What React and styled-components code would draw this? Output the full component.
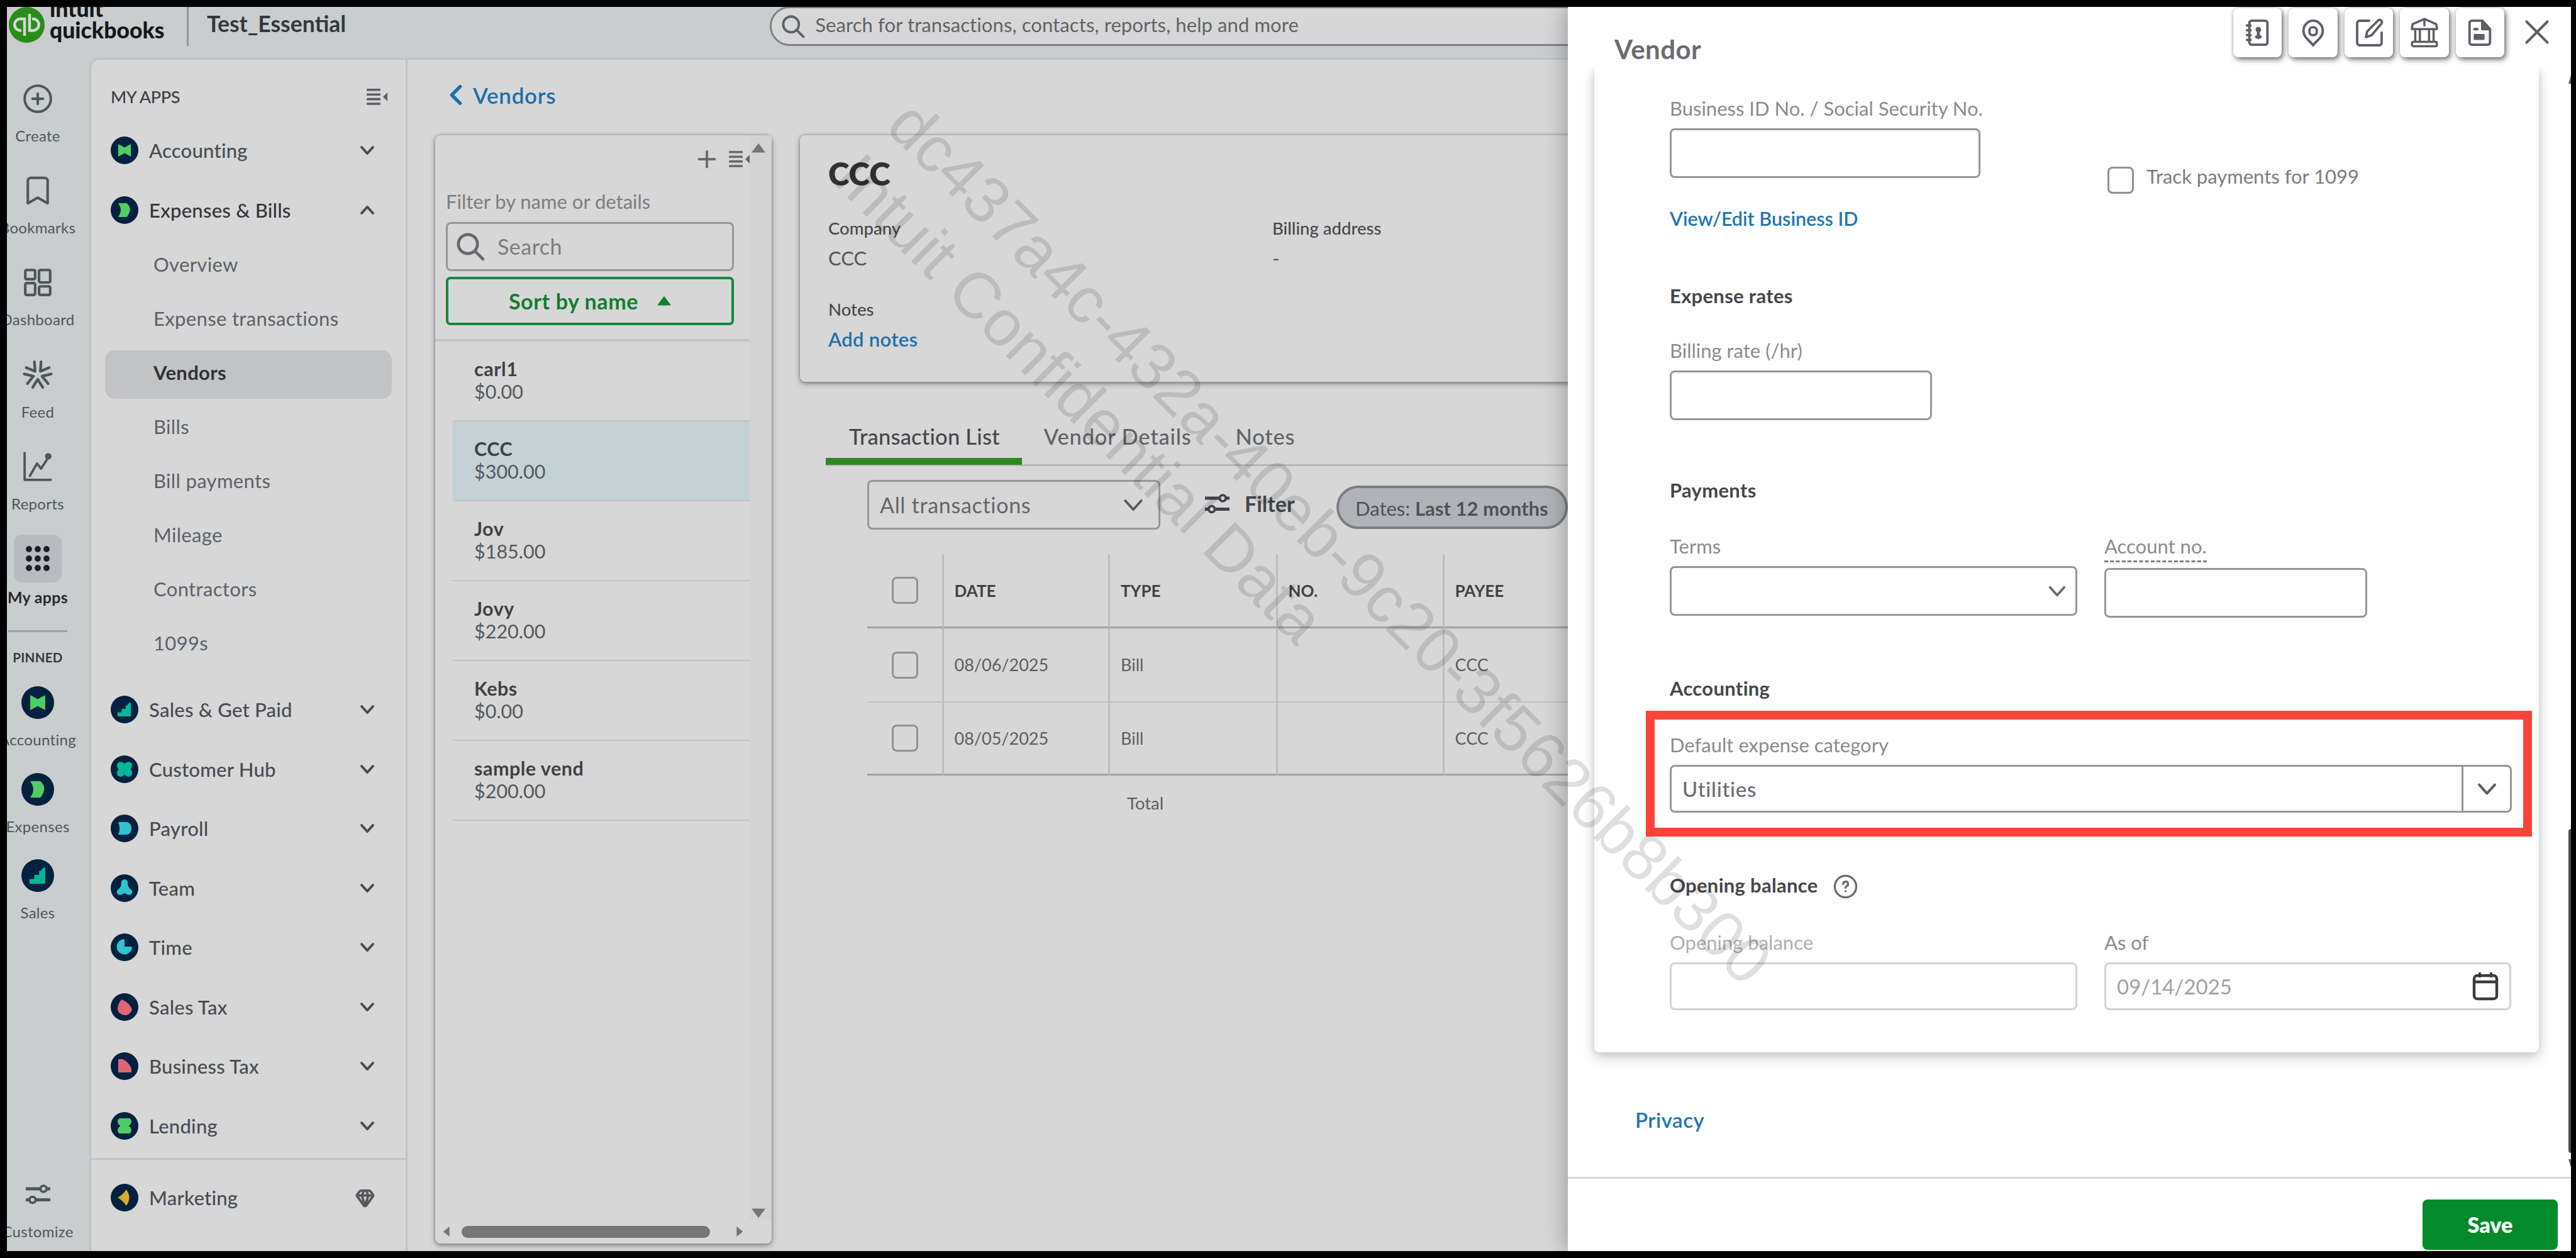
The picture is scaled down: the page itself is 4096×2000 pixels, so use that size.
import React from 'react';
import styled, { createGlobalStyle, css } from 'styled-components';
import { Bookmark, CirclePlus, Gem, X } from 'lucide-react';

const GlobalStyle = createGlobalStyle`
  *, *::before, *::after {
    box-sizing: border-box;
  }

  body {
    margin: 0;
    background: #000;
    color: #44474a;
    font-family: Lato, "Open Sans", sans-serif;
    font-size: 31px;
    line-height: 40px;
    white-space: nowrap;
  }

  svg {
    display: block;
    flex: none;
  }
`;

/* ---------- shell ---------- */

const Screen = styled.div`
  position: relative;
  display: flex;
  flex-direction: column;
  width: 4096px;
  height: 2000px;
  border: 11px solid #000;
  border-right-width: 8px;
  background: #c9cdce;
  overflow: hidden;
`;

const Header = styled.header`
  display: flex;
  align-items: flex-start;
  height: 81px;
  flex: none;
`;

const Body = styled.div`
  display: flex;
  flex: 1;
  min-height: 0;
`;

const Logo = styled.div`
  display: flex;
  align-items: flex-start;
  width: 286px;
  padding-left: 3px;
`;

const Wordmark = styled.div`
  margin: -14px 0 0 8px;
  color: #15171a;
  font-size: 35.5px;
  font-weight: 900;
  line-height: 34px;
`;

const CompanyName = styled.div`
  height: 62px;
  padding: 7px 0 0 29px;
  border-left: 3px solid #8f969b;
  color: #34383c;
  font-size: 35.5px;
  font-weight: 700;
`;

const GlobalSearch = styled.div`
  display: flex;
  align-items: flex-start;
  width: 1900px;
  height: 63px;
  margin: -1px 0 0 674px;
  padding: 6px 0 0 16px;
  gap: 16px;
  border: 3px solid #7d8488;
  border-radius: 32px;
  background: #d7d7d7;
  color: #5f6367;
  letter-spacing: 0.1px;
  flex: none;

  & > svg {
    margin-top: 5px;
  }
`;

/* ---------- rail ---------- */

const Rail = styled.nav`
  display: flex;
  flex-direction: column;
  align-items: center;
  width: 131px;
  padding: 27px 33px 0 0;
  flex: none;
`;

const RailEntry = styled.div`
  display: flex;
  flex-direction: column;
  align-items: center;
  height: ${props => props.pinned ? 137.5 : 146.2}px;
  color: ${props => props.active ? '#26292d' : '#4f565b'};
  font-size: ${props => props.active ? 25 : 24}px;
  font-weight: ${props => props.active ? 700 : 400};
  line-height: 28px;
  letter-spacing: 0.3px;
  flex: none;
`;

const RailTile = styled.div`
  display: grid;
  place-items: center;
  width: 76px;
  height: 76px;
  margin-bottom: ${props => props.active ? 9 : 7}px;
  border-radius: 13px;
  background: ${props => props.active ? '#b8bcc0' : 'transparent'};
`;

const RailDivider = styled.div`
  width: 94px;
  height: 3px;
  margin: 6px 0 28px;
  background: #98a4a7;
  flex: none;
`;

const RailHeading = styled.div`
  margin-bottom: 22px;
  color: #34393d;
  font-size: 20.5px;
  font-weight: 700;
  line-height: 24px;
  letter-spacing: 0.3px;
`;

const RailFooter = styled.div`
  margin-top: auto;
  height: 128px;
`;

/* ---------- app nav ---------- */

const AppNav = styled.nav`
  display: flex;
  flex-direction: column;
  width: 506px;
  border: 3px solid #bfc4c7;
  border-bottom: 0;
  border-radius: 16px 0 0 0;
  background: #d7d7d7;
  letter-spacing: 0.25px;
  flex: none;
`;

const NavTitle = styled.div`
  display: flex;
  align-items: center;
  justify-content: space-between;
  height: 97px;
  padding: 20px 29px 0 31px;
  color: #3b3f45;
  font-size: 27px;
  font-weight: 500;
  letter-spacing: -0.4px;
`;

const NavItem = styled.div`
  display: flex;
  align-items: center;
  height: 94.5px;
  padding: 0 49px 0 31px;
  gap: 17px;
  color: ${props => props.open ? '#30353d' : '#474c53'};
  font-weight: 500;
  flex: none;

  & > span {
    flex: 1;
  }
`;

const SubNav = styled.div`
  display: flex;
  flex-direction: column;
  gap: 9px;
  padding: 4px 22px 17px;
`;

const SubItem = styled.div`
  height: 77px;
  padding: 15px 0 0 77px;
  border-radius: 15px;
  background: ${props => props.active ? '#c2c3c5' : 'transparent'};
  color: ${props => props.active ? '#2e3238' : '#5c6167'};
  font-weight: ${props => props.active ? 700 : 400};
  letter-spacing: 0.35px;
`;

const NavFooter = styled.div`
  margin-top: 4px;
  padding-top: 13px;
  border-top: 3px solid #bfc3c6;
`;

/* ---------- main ---------- */

const Main = styled.main`
  flex: 1;
  min-width: 0;
  border-top: 3px solid #c0c5c7;
  background: #d7d7d7;
  padding: 36px 0 0 44px;
  overflow: hidden;
`;

const BackLink = styled.div`
  display: flex;
  align-items: center;
  gap: 11px;
  padding-left: 17px;
  color: #1f6ea8;
  font-size: 35px;
  font-weight: 600;
  letter-spacing: 0.7px;
`;

const Columns = styled.div`
  display: flex;
  align-items: flex-start;
  gap: 45px;
  margin-top: 44px;
`;

const Card = styled.section`
  border-radius: 8px;
  background: #d7d7d7;
  box-shadow: 0 3px 9px rgba(0, 0, 0, 0.38), 0 0 4px rgba(0, 0, 0, 0.25);
`;

const ListCard = styled(Card)`
  display: grid;
  grid-template: 1fr 38px / 1fr 35px;
  width: 535px;
  height: 1762px;
  flex: none;
`;

const ListTools = styled.div`
  display: flex;
  align-items: center;
  justify-content: flex-end;
  height: 75px;
  gap: 20px;
`;

const FilterBox = styled.div`
  padding: 10px 25px 22px 17px;
  border-bottom: 4px solid #c4c4c4;
  color: #7d7d7f;
`;

const box = css`
  border: 3px solid ${props => props.faint ? '#d3d3d6' : '#96969b'};
  border-radius: 8px;
`;

const SearchBox = styled.div`
  ${box}
  display: flex;
  align-items: center;
  height: 78px;
  margin-top: 13px;
  padding-left: 14px;
  gap: 20px;
  font-size: 34px;
  letter-spacing: 0.5px;
`;

const SortButton = styled.div`
  display: flex;
  align-items: center;
  justify-content: center;
  height: 77px;
  margin-top: 9px;
  gap: 30px;
  border: 4px solid #1a8540;
  border-radius: 7px;
  color: #0f7f31;
  font-size: 34px;
  font-weight: 700;
  letter-spacing: 0.6px;
`;

const VendorRow = styled.div`
  height: 127px;
  margin-left: 28px;
  padding: 25px 0 0 34px;
  border-bottom: 2px solid #c3c3c4;
  background: ${props => props.active ? '#c4d1d5' : 'transparent'};
  color: #56585b;
  font-size: 30.5px;
  line-height: 36px;

  & > b {
    display: block;
    color: #3f4144;
    letter-spacing: 0.5px;
  }
`;

const ScrollColumn = styled.div`
  display: flex;
  flex-direction: column;
  align-items: center;
  justify-content: space-between;
  padding: 10px 8px 0 0;
  background: #d3d3d3;
`;

const ScrollRow = styled.div`
  display: flex;
  align-items: center;
  padding-left: 10px;
`;

const ScrollThumb = styled.div`
  width: 395px;
  height: 19px;
  margin: 0 39px 0 16px;
  border-radius: 10px;
  background: #777;
`;

const Detail = styled.div`
  flex: 1;
  min-width: 0;
`;

const SummaryCard = styled(Card)`
  display: grid;
  grid-template-columns: 706px 1fr;
  grid-auto-rows: min-content;
  height: 392px;
  padding: 32px 0 0 45px;
`;

const VendorName = styled.h1`
  grid-column: 1 / -1;
  margin: 0 0 40px;
  color: #303234;
  font-size: 51px;
  font-weight: 800;
  line-height: 58px;
`;

const Fact = styled.div`
  margin-bottom: 44px;
  color: #55575a;
  line-height: 40px;

  & > small {
    display: block;
    margin-bottom: 9px;
    color: #46484b;
    font-size: 27.5px;
    font-weight: 500;
    line-height: 36px;
  }
`;

const InlineLink = styled.span`
  color: #1f6ea8;
  font-weight: 600;
  letter-spacing: 0.3px;
`;

const Tabs = styled.div`
  display: flex;
  height: 94px;
  margin: 40px 0 0 41px;
  border-bottom: 3px solid #b6b7bb;
`;

const Tab = styled.div`
  height: 92px;
  padding: 27px 35px 0 ${props => props.active ? 37 : 35}px;
  border-bottom: ${props => props.active ? '11px solid #2c8a1c' : '0'};
  color: ${props => props.active ? '#44474a' : '#606367'};
  font-size: 34.5px;
  font-weight: 500;
  letter-spacing: ${props => props.active ? 0.2 : 0.8}px;
`;

const FilterBar = styled.div`
  display: flex;
  align-items: flex-start;
  margin: 22px 0 0 107px;
`;

const TypeSelect = styled.div`
  ${box}
  display: flex;
  align-items: center;
  justify-content: space-between;
  width: 466px;
  height: 79px;
  padding: 0 23px 0 17px;
  color: #636669;
  font-size: 34px;
  letter-spacing: 0.7px;
`;

const FilterButton = styled.div`
  display: flex;
  align-items: center;
  width: 209px;
  height: 75px;
  margin-left: 71px;
  gap: 24px;
  font-size: 34px;
  font-weight: 700;
`;

const DateChip = styled.div`
  height: 69px;
  margin-top: 9px;
  padding: 12px 27px 0 26px;
  border: 4px solid #7b7d82;
  border-radius: 35px;
  background: #b1b3b8;
  color: #505257;
`;

const Table = styled.div`
  display: grid;
  grid-template-columns: 121.5px 264.5px 266.5px 265px 1fr;
  grid-template-rows: 118px 118px 116px;
  margin: 39px 0 0 107px;
  font-size: 27px;
`;

const Cell = styled.div`
  display: flex;
  align-items: center;
  padding-left: 17px;
  border-right: 3px solid #bcbdc0;
  border-bottom: ${props => props.edge ? '3px solid #a0a1a5' : '2px solid #c2c3c5'};
  color: ${props => props.head ? '#404246' : '#5c5e61'};
  font-size: ${props => props.head ? 26 : 27}px;
  font-weight: ${props => props.head ? 700 : 400};

  &:nth-child(5n) {
    border-right: 0;
  }

  &:nth-child(5n + 1) {
    padding-left: 39px;
  }
`;

const Checkbox = styled.span`
  width: 42px;
  height: 43px;
  border: 3px solid #919195;
  border-radius: 8px;
  flex: none;
`;

const TotalLabel = styled.div`
  margin: 24px 0 0 520px;
  color: #5c5e61;
  font-size: 27.5px;
`;

/* ---------- drawer ---------- */

const Drawer = styled.aside`
  position: absolute;
  top: 0;
  right: 0;
  bottom: 0;
  display: flex;
  flex-direction: column;
  width: 1595px;
  background: #fff;
  box-shadow: -4px 0 34px rgba(0, 0, 0, 0.28);
`;

const DrawerHeader = styled.div`
  display: flex;
  align-items: flex-start;
  height: 97px;
  padding: 2px 21px 0 74px;
  flex: none;
`;

const DrawerTitle = styled.h2`
  flex: 1;
  margin: 41px 0 0;
  color: #6b6c72;
  font-size: 42px;
  font-weight: 700;
  line-height: 48px;
  letter-spacing: 0.4px;
`;

const JumpButtons = styled.div`
  display: flex;
  gap: 11px;
  margin-right: 19px;
`;

const JumpButton = styled.div`
  display: grid;
  place-items: center;
  width: 77.4px;
  height: 78px;
  border-radius: 8px;
  background: #fff;
  box-shadow: 3px 4px 8px rgba(0, 0, 0, 0.5), 0 0 5px rgba(0, 0, 0, 0.25);
  color: #5f6066;
`;

const CloseButton = styled.div`
  padding-top: 5px;
  color: #5f6066;
`;

const DrawerBody = styled.div`
  flex: 1;
  min-height: 0;
  padding: 0 51px 0 42px;
  overflow: hidden;
`;

const FormCard = styled.div`
  position: relative;
  padding: 44px 43px 68px 120px;
  height: 1565px;
  border-radius: 0 0 8px 8px;
  background: #fff;
  box-shadow: 0 8px 20px rgba(0, 0, 0, 0.2), 0 0 12px rgba(0, 0, 0, 0.1);
`;

const FormRow = styled.div`
  display: grid;
  grid-template-columns: 648px 647px;
  gap: 43px;
  margin-top: ${props => props.space || 0}px;
`;

const FieldLabel = styled.div`
  width: max-content;
  height: 40px;
  margin-bottom: 12px;
  color: ${props => props.faint ? '#b1b1b5' : '#8b8b8f'};
  border-bottom: ${props => props.hint ? '3px dashed #808085' : '0'};
  ${props => props.hint && 'height: 46px; margin-bottom: 9px;'}
`;

const TextInput = styled.div`
  ${box}
  display: flex;
  align-items: center;
  justify-content: space-between;
  width: ${props => props.w ? `${props.w}px` : '100%'};
  height: ${props => props.h || 79}px;
  padding: 0 14px 0 17px;
  color: ${props => props.faint ? '#a1a1a5' : '#6b6c72'};
  font-size: 33px;
`;

const Value = styled.span`
  font-weight: 500;
  letter-spacing: 0.7px;
`;

const SectionTitle = styled.h3`
  display: flex;
  align-items: center;
  gap: 24px;
  height: 40px;
  margin: ${props => props.space}px 0 0;
  color: #46474b;
  font-size: 31px;
  font-weight: 700;
  letter-spacing: 0.3px;

  & > svg {
    margin-top: 4px;
  }
`;

const CheckLine = styled.div`
  display: flex;
  align-items: flex-start;
  height: 131px;
  gap: 20px;
  padding: 113px 0 0 5px;
  color: #7c7c81;
  font-size: 31px;

  & > div {
    margin-top: -5px;
  }
`;

const FormLink = styled.div`
  margin-top: ${props => props.space}px;
  color: #2176b6;
  font-size: ${props => props.size || 30.5}px;
  font-weight: 600;
`;

const ComboSplit = styled.div`
  display: grid;
  place-items: center;
  width: 77px;
  height: 100%;
  margin-right: -14px;
  border-left: 3px solid #96969b;
`;

// red callout drawn over the category field
const Callout = styled.div`
  position: absolute;
  left: 82px;
  top: 1022px;
  width: 1409px;
  height: 200px;
  border: 14.5px solid #fa443a;
`;

const PrivacyWrap = styled.div`
  padding-left: 65px;
  letter-spacing: 0.5px;
`;

const DrawerFooter = styled.div`
  display: flex;
  justify-content: flex-end;
  align-items: flex-start;
  height: 118px;
  padding: 33px 21px 0 0;
  border-top: 3px solid #d6d8dc;
  flex: none;
`;

const SaveButton = styled.div`
  width: 215px;
  height: 80px;
  border-radius: 8px;
  background: #028a2c;
  color: #fff;
  font-size: 34px;
  font-weight: 800;
  line-height: 80px;
  text-align: center;
`;

const EdgeScroll = styled.div`
  position: absolute;
  right: 0;
  top: 1307px;
  width: 4px;
  height: 515px;
  border-radius: 4px 0 0 4px;
  background: #4d4d4f;
`;

const EdgeArrow = styled.div`
  position: absolute;
  right: 0;
  top: ${props => props.y}px;
  width: 4px;
  height: 13px;
  background: #5b5b5e;
  clip-path: ${props => props.down ? 'polygon(0 0, 100% 0, 100% 100%)' : 'polygon(100% 0, 100% 100%, 0 100%)'};
`;

const Watermark = styled.div`
  position: absolute;
  left: 1462px;
  top: 126px;
  color: rgba(0, 0, 0, 0.125);
  font-family: "Liberation Sans", Arial, sans-serif;
  font-size: 103.5px;
  line-height: 119px;
  transform: rotate(45deg);
  transform-origin: 0 0;
  pointer-events: none;
`;

/* ---------- icons ---------- */

const Icon = ({ size = 48, w = 2, color = 'currentColor', children }) => (
  <svg width={size} height={size} viewBox="0 0 24 24" fill="none" stroke={color}
    strokeWidth={w} strokeLinecap="round" strokeLinejoin="round">{children}</svg>
);

const Chevron = ({ up, size = 24, color = '#484c50', w = 4 }) => (
  <Icon size={size} w={w} color={color}><path d={up ? 'M3 17l9-10 9 10' : 'M3 7l9 10 9-10'} /></Icon>
);

const Triangle = ({ dir = 'up', size = 22, color = '#757575' }) => {
  const points = { up: '0,19 12,3 24,19', down: '0,5 24,5 12,21', left: '19,0 19,24 4,12', right: '5,0 5,24 20,12' };
  return <svg width={size} height={size} viewBox="0 0 24 24" fill={color}><polygon points={points[dir]} /></svg>;
};

const Collapse = ({ color = '#5a5e62' }) => (
  <svg width="33" height="26" viewBox="0 0 33 26" fill={color}>
    <rect width="22" height="3.6" y="0" rx="1" /><rect width="22" height="3.6" y="7.4" rx="1" />
    <rect width="22" height="3.6" y="14.8" rx="1" /><rect width="22" height="3.6" y="22.2" rx="1" />
    <path d="M33 6v14l-7-7z" />
  </svg>
);

const Magnifier = ({ size, color = '#5f6367' }) => (
  <svg width={size} height={size} viewBox="0 0 40 40" fill="none" stroke={color} strokeWidth="4.2">
    <circle cx="16" cy="16" r="13.5" /><path d="M25.5 25.5L38.5 38.5" />
  </svg>
);

const Sliders = ({ w = 40, color = '#4f565b' }) => (
  <svg width={w} height={w * 0.86} viewBox="0 0 40 34" fill="none" stroke={color} strokeWidth="5">
    <path d="M0 8h24M34 8h6M0 26h6M16 26h24" /><circle cx="29" cy="8" r="5" strokeWidth="4" /><circle cx="11" cy="26" r="5" strokeWidth="4" />
  </svg>
);

const QbMark = () => (
  <svg width="57" height="57" viewBox="0 0 57 57">
    <circle cx="28.5" cy="28.5" r="28.5" fill="#2b8c1c" />
    <g fill="none" stroke="#d3d9d1" strokeWidth="4.4">
      <path d="M25 46V19h-6.5a9 9 0 0 0 0 18.5H20" />
      <path d="M33 11v26.500h5.500a9 9 0 0 0 0-18.500H37" />
    </g>
  </svg>
);

const glyphs = {
  accounting: ['#4fce67', <path d="M6.500 6.500l5.500 3 5.500-3v11l-5.500-3-5.500 3z" />],
  expenses: ['#4fce67', <path d="M6.500 6h7.500c3 3.200 4.400 6 0 12h-7.500c3-4.500 3-7.500 0-12z" />],
  sales: ['#04b797', <path d="M17.500 6v12h-11.500v-3.500h3.500v-3h3.500v-3h1.500c.5-1.500 1.500-2.500 3-2.500z" />],
  customers: ['#04b797', <path d="M6 6.500c2-1.500 4.500-1 6 .8 1.500-1.800 4-2.300 6-.8 1 2 .6 3.800-.8 5.500 1.400 1.700 1.800 3.500.8 5.500-2 1.500-4.500 1-6-.8-1.500 1.800-4 2.300-6 .8-1-2-.6-3.800.8-5.500-1.400-1.700-1.800-3.500-.8-5.500z" />],
  payroll: ['#2fc3d2', <path d="M6.500 6.500h7c2.800 0 4.500 2.500 4.500 5.500s-1.700 5.500-4.500 5.500h-7c1.600-3.500 1.600-7.500 0-11z" />],
  team: ['#2fc3d2', <path d="M12 4.500c2 0 2.800 1.200 2.800 3 0 2.500.7 4 2.200 5.200 1.500 1 2 2.300 1.500 3.600-1 2-3.500 1.700-6.500 0-3 1.700-5.500 2-6.500 0-.5-1.300 0-2.600 1.500-3.600 1.500-1.200 2.200-2.700 2.200-5.200 0-1.800.8-3 2.800-3z" />],
  time: ['#2fc3d2', <path d="M12 5v6.500h6.500a6.600 6.600 0 1 1-6.500-6.500z" />],
  salesTax: ['#dd6775', <path d="M9.500 5.500c4 1.500 7.500 4.500 9 8.500-1 3.500-4 5.500-7 5-3.500-.6-5.700-3-5.500-6 .2-3 1.500-5.500 3.500-7.500z" />],
  businessTax: ['#dd6775', <path d="M6.500 6h4c4 2 6.500 5 7.500 8.500v3h-11.500z" />],
  lending: ['#4fce67', <path d="M7.500 5.500h9c2.500 2 1.500 5-1 6.500 2.500 1.500 3.500 4.500 1 6.500h-9c-2.500-2-1.500-5 1-6.500-2.500-1.500-3.500-4.500-1-6.500z" />],
  marketing: ['#d8ac2c', <path d="M6 12c3-1.500 5.500-4 7.500-7 3.500 4.500 3.500 9.500 0 14-2-3-4.500-5.500-7.500-7z" />],
};

const AppBadge = ({ name, size = 44 }) => (
  <svg width={size} height={size} viewBox="0 0 24 24">
    <circle cx="12" cy="12" r="12" fill="#04213f" />
    <g fill={glyphs[name][0]}>{glyphs[name][1]}</g>
  </svg>
);

const railIcons = {
  create: <CirclePlus size={50} strokeWidth={1.9} />,
  bookmarks: <Bookmark size={54} strokeWidth={1.8} />,
  dashboard: <Icon size={50} w={2}><rect x="2.500" y="2.500" width="7.500" height="7" rx="1" /><rect x="13" y="2.500" width="8.500" height="9.500" rx="1" /><rect x="2.500" y="12.500" width="7.500" height="9" rx="1" /><rect x="13" y="15" width="8.500" height="6.500" rx="1" /></Icon>,
  feed: <Icon size={52} w={2}>{[0, 72, 144, 216, 288].map(a => <path key={a} transform={`rotate(${a + 36} 12 12)`} d="M8.300 2.800L12 8.700l3.700-5.900" />)}</Icon>,
  reports: <Icon size={50} w={1.8}><path d="M2 1.500V22h20M6 19l5.500-9.500 3 4L20 5" /><circle cx="20" cy="4" r="1.600" fill="currentColor" /></Icon>,
  apps: <svg width="38" height="42" viewBox="0 0 38 42" fill="#1d2023">{[5, 19, 33].map(x => [6, 21, 36].map(y => <circle key={`${x}${y}`} cx={x} cy={y} r="4.900" />))}</svg>,
};

const drawerIcons = [
  <Icon key="c" size={46} w={2}><rect x="5" y="2" width="15" height="20" rx="2" /><path d="M3 6h3M3 10h3M3 14h3M3 18h3" /><circle cx="12.500" cy="9.500" r="1.300" fill="currentColor" /><path d="M12.500 12v4M11 15.500h3" strokeWidth="2.600" /></Icon>,
  <Icon key="p" size={46} w={2}><path d="M12 22.500c-1-2.500-8-6-8-12a8 8.500 0 0 1 16 0c0 6-7 9.500-8 12z" /><rect x="9" y="7.500" width="6" height="6.500" rx="2.500" /></Icon>,
  <Icon key="e" size={48} w={1.9}><path d="M12 2.500H4.500a2 2 0 0 0-2 2V20a2 2 0 0 0 2 2H20a2 2 0 0 0 2-2v-8" /><path d="M9.500 15.500l1-4.500L19 2.500a1.700 1.700 0 0 1 2.800 2.300L14 14z" /></Icon>,
  <Icon key="b" size={50} w={1.7}><path d="M2.500 8l.5-2.500 9-4 9 4 .5 2.500v1.200h-19zM12 2.500v4M5 9.500v9M8.500 9.500v9M15.500 9.500v9M19 9.500v9" /><rect x="2.500" y="19" width="19" height="3.300" rx="1" /></Icon>,
  <Icon key="d" size={46} w={2}><path d="M14 2H5.500a2 2 0 0 0-2 2v16a2 2 0 0 0 2 2h13a2 2 0 0 0 2-2V9z" /><path d="M14 2v7h6.500z" fill="currentColor" /><path d="M7.500 9h2.500" /><rect x="7.500" y="13.500" width="8" height="4" fill="currentColor" strokeWidth="1" /></Icon>,
];

/* ---------- data ---------- */

const railItems = [
  ['create', 'Create'], ['bookmarks', 'Bookmarks'], ['dashboard', 'Dashboard'],
  ['feed', 'Feed'], ['reports', 'Reports'], ['apps', 'My apps'],
];
const pinned = [['accounting', 'Accounting'], ['expenses', 'Expenses'], ['sales', 'Sales']];
const subItems = ['Overview', 'Expense transactions', 'Vendors', 'Bills', 'Bill payments', 'Mileage', 'Contractors', '1099s'];
const apps = [
  ['sales', 'Sales & Get Paid'], ['customers', 'Customer Hub'], ['payroll', 'Payroll'], ['team', 'Team'],
  ['time', 'Time'], ['salesTax', 'Sales Tax'], ['businessTax', 'Business Tax'], ['lending', 'Lending'],
];
const vendors = [
  ['carl1', '$0.00'], ['CCC', '$300.00'], ['Jov', '$185.00'],
  ['Jovy', '$220.00'], ['Kebs', '$0.00'], ['sample vend', '$200.00'],
];
const bills = [['08/06/2025', 'Bill', '', 'CCC'], ['08/05/2025', 'Bill', '', 'CCC']];

/* ---------- parts ---------- */

const SideRail = () => (
  <Rail>
    {railItems.map(([icon, label]) => (
      <RailEntry key={label} active={icon === 'apps' ? 1 : undefined}>
        <RailTile active={icon === 'apps' ? 1 : undefined}>{railIcons[icon]}</RailTile>
        {label}
      </RailEntry>
    ))}
    <RailDivider />
    <RailHeading>PINNED</RailHeading>
    {pinned.map(([icon, label]) => (
      <RailEntry key={label} pinned={1}>
        <RailTile><AppBadge name={icon} size={52} /></RailTile>
        {label}
      </RailEntry>
    ))}
    <RailFooter>
      <RailEntry>
        <RailTile><Sliders w={39} /></RailTile>
        Customize
      </RailEntry>
    </RailFooter>
  </Rail>
);

const Navigation = () => (
  <AppNav>
    <NavTitle>MY APPS<Collapse /></NavTitle>
    <NavItem><AppBadge name="accounting" /><span>Accounting</span><Chevron /></NavItem>
    <NavItem open><AppBadge name="expenses" /><span>Expenses &amp; Bills</span><Chevron up /></NavItem>
    <SubNav>
      {subItems.map(item => <SubItem key={item} active={item === 'Vendors' ? 1 : undefined}>{item}</SubItem>)}
    </SubNav>
    {apps.map(([icon, label]) => (
      <NavItem key={label}><AppBadge name={icon} /><span>{label}</span><Chevron /></NavItem>
    ))}
    <NavFooter>
      <NavItem><AppBadge name="marketing" /><span>Marketing</span><Gem size={31} strokeWidth={3} color="#55595d" /></NavItem>
    </NavFooter>
  </AppNav>
);

const VendorList = () => (
  <ListCard>
    <div>
      <ListTools>
        <Icon size={30} w={3} color="#66686b"><path d="M12 2v20M2 12h20" /></Icon>
        <Collapse color="#66686b" />
      </ListTools>
      <FilterBox>
        Filter by name or details
        <SearchBox><Magnifier size={45} color="#66686b" />Search</SearchBox>
        <SortButton>Sort by name<Triangle color="#0f7f31" /></SortButton>
      </FilterBox>
      {vendors.map(([name, amount]) => (
        <VendorRow key={name} active={name === 'CCC' ? 1 : undefined}><b>{name}</b>{amount}</VendorRow>
      ))}
    </div>
    <ScrollColumn><Triangle /><Triangle dir="down" /></ScrollColumn>
    <ScrollRow><Triangle dir="left" size={16} /><ScrollThumb /><Triangle dir="right" size={16} /></ScrollRow>
  </ListCard>
);

const VendorDetail = () => (
  <Detail>
    <SummaryCard>
      <VendorName>CCC</VendorName>
      <Fact><small>Company</small>CCC</Fact>
      <Fact><small>Billing address</small>-</Fact>
      <Fact><small>Notes</small><InlineLink>Add notes</InlineLink></Fact>
    </SummaryCard>
    <Tabs>
      <Tab active>Transaction List</Tab>
      <Tab>Vendor Details</Tab>
      <Tab>Notes</Tab>
    </Tabs>
    <FilterBar>
      <TypeSelect>All transactions<Chevron size={34} w={2.6} color="#55585b" /></TypeSelect>
      <FilterButton><Sliders w={39} color="#404347" />Filter</FilterButton>
      <DateChip>Dates: <b>Last 12 months</b></DateChip>
    </FilterBar>
    <Table>
      <Cell head edge><Checkbox /></Cell>
      {['DATE', 'TYPE', 'NO.', 'PAYEE'].map(h => <Cell key={h} head edge>{h}</Cell>)}
      {bills.map((bill, i) => (
        <React.Fragment key={bill[0]}>
          <Cell edge={i === 1 ? 1 : undefined}><Checkbox /></Cell>
          {bill.map((value, n) => <Cell key={n} edge={i === 1 ? 1 : undefined}>{value}</Cell>)}
        </React.Fragment>
      ))}
    </Table>
    <TotalLabel>Total</TotalLabel>
  </Detail>
);

const VendorDrawer = () => (
  <Drawer>
    <DrawerHeader>
      <DrawerTitle>Vendor</DrawerTitle>
      <JumpButtons>
        {drawerIcons.map((icon, i) => <JumpButton key={i}>{icon}</JumpButton>)}
      </JumpButtons>
      <CloseButton><X size={66} strokeWidth={1.5} /></CloseButton>
    </DrawerHeader>
    <DrawerBody>
      <FormCard>
        <FormRow>
          <div>
            <FieldLabel>Business ID No. / Social Security No.</FieldLabel>
            <TextInput w={494} />
          </div>
          <CheckLine><Checkbox /><div>Track payments for 1099</div></CheckLine>
        </FormRow>
        <FormLink space={44}>View/Edit Business ID</FormLink>

        <SectionTitle space={83}>Expense rates</SectionTitle>
        <FormRow space={47}>
          <div>
            <FieldLabel>Billing rate (/hr)</FieldLabel>
            <TextInput w={417} />
          </div>
        </FormRow>

        <SectionTitle space={91}>Payments</SectionTitle>
        <FormRow space={49}>
          <div>
            <FieldLabel>Terms</FieldLabel>
            <TextInput><span /><Chevron size={30} w={3} color="#6b6c72" /></TextInput>
          </div>
          <div>
            <FieldLabel hint>Account no.</FieldLabel>
            <TextInput w={418} />
          </div>
        </FormRow>

        <SectionTitle space={92}>Accounting</SectionTitle>
        <FormRow space={50}>
          <FieldLabel>Default expense category</FieldLabel>
        </FormRow>
        <TextInput h={76}><Value>Utilities</Value><ComboSplit><Chevron size={33} w={3} color="#5f6066" /></ComboSplit></TextInput>

        <SectionTitle space={95}>
          Opening balance
          <Icon size={39} w={2} color="#6b6c72"><circle cx="12" cy="12" r="10.500" /><path d="M9.700 9.500a2.400 2.400 0 1 1 3.300 2.200c-.7.300-1 .7-1 1.500M12 16.500v.1" /></Icon>
        </SectionTitle>
        <FormRow space={51}>
          <div>
            <FieldLabel faint>Opening balance</FieldLabel>
            <TextInput faint h={76} />
          </div>
          <div>
            <FieldLabel>As of</FieldLabel>
            <TextInput faint h={76}>
              09/14/2025
              <Icon size={48} w={2.2} color="#3a3b3f"><rect x="3" y="3.500" width="18" height="18.500" rx="2.500" /><path d="M3 8.500h18M7.500 2v2M16.500 2v2" /></Icon>
            </TextInput>
          </div>
        </FormRow>
        <Callout />
      </FormCard>
      <PrivacyWrap><FormLink space={87} size={33}>Privacy</FormLink></PrivacyWrap>
    </DrawerBody>
    <DrawerFooter><SaveButton>Save</SaveButton></DrawerFooter>
    <EdgeArrow y={109} />
    <EdgeScroll />
    <EdgeArrow y={1832} down />
  </Drawer>
);

export default function App() {
  return (
    <>
      <GlobalStyle />
      <Screen>
        <Header>
          <Logo>
            <QbMark />
            <Wordmark>intuit<br />quickbooks</Wordmark>
          </Logo>
          <CompanyName>Test_Essential</CompanyName>
          <GlobalSearch>
            <Magnifier size={37} />
            Search for transactions, contacts, reports, help and more
          </GlobalSearch>
        </Header>
        <Body>
          <SideRail />
          <Navigation />
          <Main>
            <BackLink><Icon size={32} w={4} color="#1f6ea8"><path d="M17 2L7 12l10 10" /></Icon>Vendors</BackLink>
            <Columns>
              <VendorList />
              <VendorDetail />
            </Columns>
          </Main>
        </Body>
        <VendorDrawer />
        <Watermark>dc437a4c-432a-40eb-9c20-3f5626b8b300<br />Intuit Confidential Data</Watermark>
      </Screen>
    </>
  );
}
